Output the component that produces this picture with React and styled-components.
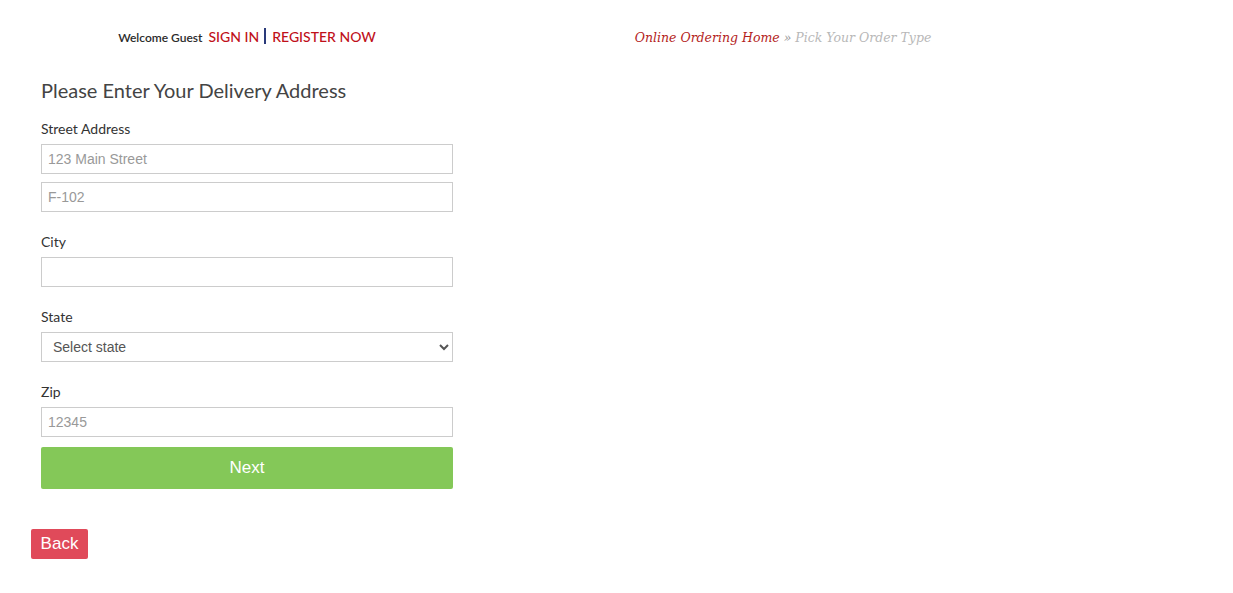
import React from 'react';
import styled, { createGlobalStyle } from 'styled-components';

const GlobalStyle = createGlobalStyle`
  body {
    margin: 0;
    background: #fff;
    font-family: Lato, "Open Sans", sans-serif;
    color: #333;
  }
`;

const Page = styled.div`
  width: 1233px;
`;

const Header = styled.div`
  display: grid;
  grid-template-columns: 494px 578px;
  height: 58px;
  align-items: start;
`;

const Welcome = styled.div`
  text-align: center;
  font-size: 12px;
  font-weight: 600;
  color: #2b2b2b;
  padding-top: 28px;
`;

const AccountLink = styled.a`
  color: #c0101a;
  font-size: 14px;
  font-weight: 500;
  text-decoration: none;
  margin-left: ${(p) => (p.$first ? '6px' : '0')};
`;

const Divider = styled.span`
  display: inline-block;
  width: 2px;
  height: 16px;
  background: #2a3a7a;
  margin: 0 6px 0 5px;
  vertical-align: -2px;
`;

const Breadcrumb = styled.div`
  text-align: center;
  font-family: "DejaVu Serif", "Liberation Serif", serif;
  font-style: italic;
  font-size: 12.5px;
  color: #999;
  padding-top: 30px;
`;

const CrumbLink = styled.a`
  color: #b4231c;
  text-decoration: none;
`;

const CrumbCurrent = styled.span`
  color: #b8b8b8;
`;

const Form = styled.form`
  width: 412px;
  margin-left: 41px;
  display: flex;
  flex-direction: column;
`;

const Title = styled.h2`
  margin: 20px 0 17px;
  font-size: 20px;
  font-weight: 400;
  color: #444;
  line-height: 24px;
`;

const Group = styled.div`
  display: flex;
  flex-direction: column;
  gap: 5px;
  margin-bottom: 20px;
`;

const Label = styled.label`
  font-size: 14px;
  color: #333;
  line-height: 20px;
`;

const Input = styled.input`
  box-sizing: border-box;
  width: 100%;
  height: 30px;
  margin-top: ${(p) => (p.$extra ? '3px' : '0')};
  border: 1px solid #ccc;
  padding: 0 6px;
  font-family: "Liberation Sans", Arial, sans-serif;
  font-size: 14px;
  color: #555;
  outline: none;
  &::placeholder {
    color: #999;
  }
`;

const Select = styled.select`
  box-sizing: border-box;
  width: 100%;
  height: 30px;
  border: 1px solid #ccc;
  border-radius: 0;
  padding: 0 7px;
  font-family: "Liberation Sans", Arial, sans-serif;
  font-size: 14px;
  color: #555;
  background: #fff;
`;

const NextButton = styled.button`
  height: 42px;
  border: none;
  border-radius: 2px;
  background: #84c858;
  color: #fff;
  font-family: "Liberation Sans", Arial, sans-serif;
  font-size: 17px;
  margin-top: -10px;
`;

const BackButton = styled.button`
  display: block;
  margin: 40px 0 0 31px;
  width: 57px;
  height: 30px;
  border: none;
  border-radius: 2px;
  background: #e04a5a;
  color: #fff;
  font-family: "Liberation Sans", Arial, sans-serif;
  font-size: 17px;
  padding: 0;
`;

export default function App() {
  return (
    <Page>
      <GlobalStyle />
      <Header>
        <Welcome>
          Welcome Guest
          <AccountLink $first href="#">SIGN IN</AccountLink>
          <Divider />
          <AccountLink href="#">REGISTER NOW</AccountLink>
        </Welcome>
        <Breadcrumb>
          <CrumbLink href="#">Online Ordering Home</CrumbLink> »{' '}
          <CrumbCurrent>Pick Your Order Type</CrumbCurrent>
        </Breadcrumb>
      </Header>
      <Form onSubmit={(e) => e.preventDefault()}>
        <Title>Please Enter Your Delivery Address</Title>
        <Group>
          <Label>Street Address</Label>
          <Input placeholder="123 Main Street" />
          <Input $extra placeholder="F-102" />
        </Group>
        <Group>
          <Label>City</Label>
          <Input />
        </Group>
        <Group>
          <Label>State</Label>
          <Select defaultValue="">
            <option value="">Select state</option>
          </Select>
        </Group>
        <Group>
          <Label>Zip</Label>
          <Input placeholder="12345" />
        </Group>
        <NextButton type="submit">Next</NextButton>
      </Form>
      <BackButton type="button">Back</BackButton>
    </Page>
  );
}
